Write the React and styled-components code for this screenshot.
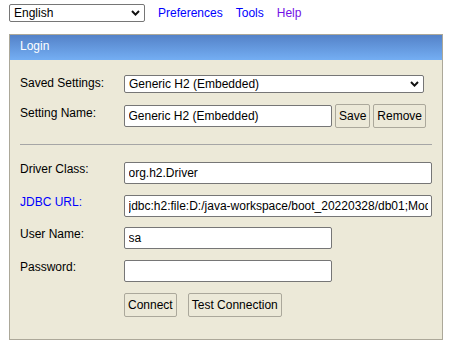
import React from 'react';
import styled, { createGlobalStyle } from 'styled-components';

const GlobalStyle = createGlobalStyle`
  html, body { margin: 0; padding: 0; background: #ffffff; }
  body {
    font-family: "Liberation Sans", Arial, sans-serif;
    font-size: 12px;
    color: #000;
  }
`;

const FONT = `12px "Liberation Sans", Arial, sans-serif`;

const Page = styled.div`
  padding: 4px 0 0 9px;
  width: 434px;
`;

const TopBar = styled.div`
  display: flex;
  align-items: center;
  gap: 13px;
  height: 18px;
`;

const SelectWrap = styled.div`
  position: relative;
  flex: none;
  width: ${(p) => p.$width}px;
  height: 18px;
`;

const NativeSelect = styled.select`
  appearance: none;
  -webkit-appearance: none;
  display: block;
  width: 100%;
  height: 100%;
  box-sizing: border-box;
  margin: 0;
  border: 1px solid #767676;
  border-radius: 2px;
  background: #fff;
  font: ${FONT};
  color: #000;
  padding: 0 20px 0 4px;
  outline: none;
`;

const ChevronSvg = styled.svg`
  position: absolute;
  right: 5px;
  top: 50%;
  margin-top: -3px;
  width: 9px;
  height: 6px;
  pointer-events: none;
`;

const Chevron = () => (
  <ChevronSvg viewBox="0 0 9 6">
    <path d="M1 1 L4.5 4.6 L8 1" fill="none" stroke="#111" strokeWidth="2" />
  </ChevronSvg>
);

const NavLink = styled.a`
  color: ${(p) => (p.$visited ? '#7410e6' : '#0000ff')};
  text-decoration: none;
  line-height: normal;
`;

const Panel = styled.div`
  margin-top: 12px;
  border: 1px solid #aca899;
  background: #ece9d8;
`;

const PanelHeader = styled.div`
  height: 25px;
  box-sizing: border-box;
  padding: 4px 10px 0;
  color: #fff;
  line-height: normal;
  background: linear-gradient(to bottom, #5482c8, #74aef3);
`;

const PanelBody = styled.div`
  padding: 15px 10px 22px;
`;

const FieldGrid = styled.div`
  display: grid;
  grid-template-columns: 104px 1fr;
  row-gap: ${(p) => p.$gap}px;
  align-items: start;
`;

const Label = styled.label`
  padding-top: ${(p) => p.$offset || 0}px;
  line-height: normal;
  color: ${(p) => (p.$link ? '#0000ff' : '#000')};
`;

const Field = styled.div`
  display: flex;
  align-items: center;
  gap: ${(p) => p.$gap || 3}px;
`;

const TextInput = styled.input`
  box-sizing: border-box;
  width: ${(p) => p.$width}px;
  height: 22px;
  margin: 0;
  border: 1px solid #767676;
  border-radius: 2px;
  padding: 0 3.5px;
  font: ${FONT};
  background: #fff;
  color: #000;
  outline: none;
`;

const Button = styled.button`
  box-sizing: border-box;
  height: 24px;
  margin: 0;
  padding: 0 3px;
  border: 1px solid #aba89b;
  border-radius: 2px;
  background: #ece9d8;
  font: ${FONT};
  color: #000;
`;

const Separator = styled.hr`
  margin: 16.5px 0 17px;
  border: 0;
  border-top: 1px solid #a6a6a6;
  height: 0;
`;

export default function App() {
  return (
    <>
      <GlobalStyle />
      <Page>
        <TopBar>
          <SelectWrap $width={136}>
            <NativeSelect defaultValue="en">
              <option value="en">English</option>
            </NativeSelect>
            <Chevron />
          </SelectWrap>
          <NavLink href="#">Preferences</NavLink>
          <NavLink href="#">Tools</NavLink>
          <NavLink href="#" $visited>Help</NavLink>
        </TopBar>

        <Panel>
          <PanelHeader>Login</PanelHeader>
          <PanelBody>
            <FieldGrid $gap={10.5}>
              <Label $offset={1}>Saved Settings:</Label>
              <SelectWrap $width={300}>
                <NativeSelect defaultValue="h2e">
                  <option value="h2e">Generic H2 (Embedded)</option>
                </NativeSelect>
                <Chevron />
              </SelectWrap>

              <Label $offset={2.5}>Setting Name:</Label>
              <Field>
                <TextInput $width={208} defaultValue="Generic H2 (Embedded)" />
                <Button>Save</Button>
                <Button>Remove</Button>
              </Field>
            </FieldGrid>

            <Separator />

            <FieldGrid $gap={10.7}>
              <Label>Driver Class:</Label>
              <TextInput $width={308} defaultValue="org.h2.Driver" />

              <Label $link>JDBC URL:</Label>
              <TextInput
                $width={308}
                defaultValue="jdbc:h2:file:D:/java-workspace/boot_20220328/db01;Mode=MySQL"
              />

              <Label>User Name:</Label>
              <TextInput $width={208} defaultValue="sa" />

              <Label>Password:</Label>
              <TextInput $width={208} type="password" defaultValue="" />

              <span />
              <Field $gap={11}>
                <Button>Connect</Button>
                <Button>Test Connection</Button>
              </Field>
            </FieldGrid>
          </PanelBody>
        </Panel>
      </Page>
    </>
  );
}
